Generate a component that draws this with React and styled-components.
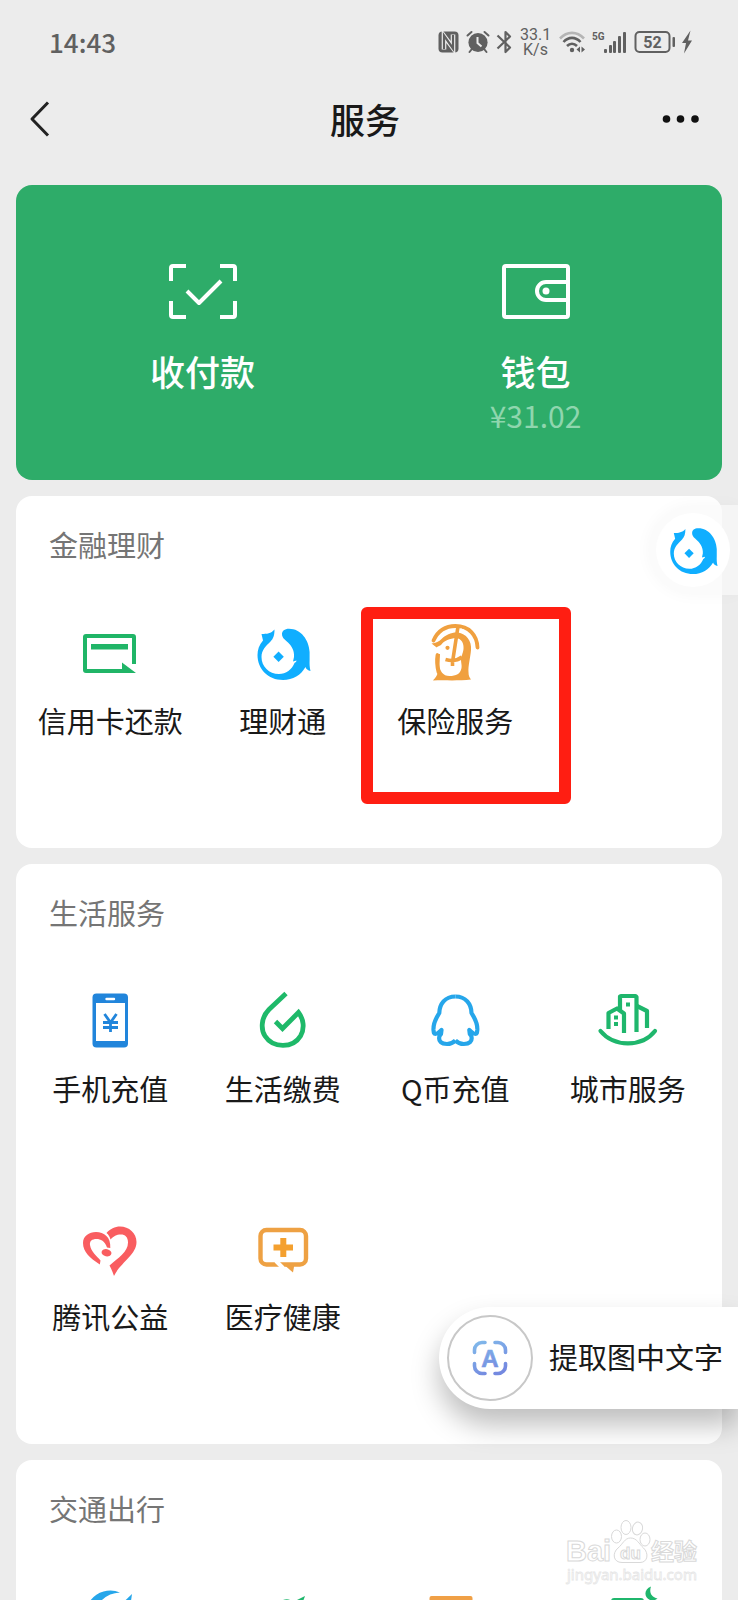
import React from 'react'
import styled, { createGlobalStyle } from 'styled-components'

const GlobalStyle = createGlobalStyle`
  * {
    box-sizing: border-box;
  }

  body {
    margin: 0;
    background-color: #ececec;
    color: #191919;
    font-family: 'Noto Sans CJK SC', 'Noto Sans', sans-serif;
  }

  button {
    padding: 0;
    border: none;
    background: none;
    color: inherit;
    font: inherit;
    cursor: pointer;
  }

  svg {
    display: block;
    flex: none;
    overflow: visible;
  }
`

const Screen = styled.div`
  position: relative;
  height: 100vh;
  overflow: hidden;
`

/* ---------- status bar ---------- */

const StatusBar = styled.header`
  display: flex;
  justify-content: space-between;
  align-items: center;
  height: 83px;
  padding: 0 46px 0 49px;
  color: #606060;
`

const Clock = styled.time`
  font-size: 26px;
  font-weight: 500;
  line-height: 32px;
`

const StatusIcons = styled.div`
  display: flex;
  align-items: center;
  gap: 8px;
`

const Speed = styled.div`
  width: 31px;
  font-family: Roboto, sans-serif;
  font-size: 16px;
  line-height: 15px;
  text-align: center;
`

const Nfc = () => (
  <svg width='21' height='22' viewBox='0 0 21 22'>
    <rect x='0.5' y='0.5' width='20' height='21' rx='4' fill='#606060' />
    <path d='M6 18.5V5L15 17V3.5' fill='none' stroke='#ececec' strokeWidth='4.6' />
    <path d='M6 18V4.5L15 17.5V4' fill='none' stroke='#606060' strokeWidth='2.2' />
  </svg>
)

const Alarm = () => (
  <svg width='22' height='22' viewBox='0 0 22 22'>
    <circle cx='11' cy='11.5' r='9.6' fill='#606060' />
    <path d='M4.5 18.5L2.5 21M17.5 18.5L19.5 21M0.5 4.5L4.5 1M21.5 4.5L17.5 1' stroke='#606060' strokeWidth='2' strokeLinecap='round' />
    <path d='M10.5 6V12L14.5 15.5' fill='none' stroke='#ececec' strokeWidth='2' />
  </svg>
)

const Bluetooth = () => (
  <svg width='15' height='24' viewBox='0 0 15 24' fill='none' stroke='#606060' strokeWidth='2.2' strokeLinejoin='round'>
    <path d='M0.5 5.5L13 17.5L8.5 22V2L13 6.5L0.5 18.5' />
  </svg>
)

const Wifi = () => (
  <svg width='25' height='22' viewBox='0 0 25 22' fill='none' strokeWidth='2.6'>
    <path d='M1 7.5C8 0 18 0 25 7.5' stroke='#b5b5b5' />
    <path d='M4.5 11C9.5 5.5 16.5 5.5 21.5 11' stroke='#606060' />
    <path d='M8 15C11 12 15 12 18 15' stroke='#606060' />
    <circle cx='13' cy='19' r='2.2' fill='#606060' />
    <path d='M21 15.5V21.5L17.5 18.5ZM22.5 15.5V21.5L26 18.5Z' fill='#606060' />
  </svg>
)

const Signal = () => (
  <svg width='34' height='22' viewBox='0 0 34 22' fill='#606060'>
    <text x='0' y='9' fontFamily='Roboto, sans-serif' fontSize='10' fontWeight='700'>5G</text>
    <rect x='12' y='18' width='3' height='4' rx='1' />
    <rect x='17' y='14' width='3' height='8' rx='1' />
    <rect x='21' y='10' width='3' height='12' rx='1' />
    <rect x='26' y='5' width='3' height='17' rx='1' />
    <rect x='31' y='1' width='3' height='21' rx='1' />
  </svg>
)

const Battery = () => (
  <svg width='40' height='22' viewBox='0 0 40 22'>
    <rect x='1.5' y='1' width='34' height='20' rx='4' fill='none' stroke='#606060' strokeWidth='2' />
    <rect x='38.5' y='6' width='2.5' height='10' rx='1' fill='#606060' />
    <text x='18.5' y='17' textAnchor='middle' fontFamily='Roboto, sans-serif' fontSize='16' fontWeight='700' fill='#606060'>52</text>
  </svg>
)

const Bolt = () => (
  <svg width='10' height='24' viewBox='0 0 10 24' fill='#606060'>
    <path d='M8.5 0.5L0 13H4L2 23.5L10 10.5H6Z' />
  </svg>
)

/* ---------- navigation bar ---------- */

const NavBar = styled.nav`
  display: grid;
  grid-template-columns: 1fr auto 1fr;
  align-items: center;
  height: 72px;
  padding: 0 36px 0 28px;
`

const NavButton = styled.button`
  justify-self: ${({ $end }) => $end ? 'end' : 'start'};
`

const Title = styled.h1`
  margin: 0;
  font-size: 35px;
  font-weight: 500;
  line-height: 48px;
`

/* ---------- wallet panel ---------- */

const Main = styled.main`
  display: flex;
  flex-direction: column;
  gap: 16px;
  padding: 30px 16px 0;
`

const PayPanel = styled.section`
  display: grid;
  grid-template-columns: 1fr 1fr;
  align-items: start;
  padding: 79px 20px 45px;
  border-radius: 16px;
  background-color: #2eac69;
  color: #fff;
`

const PayButton = styled.button`
  display: flex;
  flex-direction: column;
  align-items: center;
`

const PayLabel = styled.span`
  margin-top: 28px;
  font-size: 35px;
  font-weight: 500;
  line-height: 48px;
`

const Amount = styled.span`
  color: #8fd6ae;
  font-size: 30px;
  line-height: 40px;
`

const PayCode = () => (
  <svg width='68' height='55' viewBox='0 0 68 55' fill='none' stroke='#fff' strokeWidth='4'>
    <path d='M2 17V4Q2 2 4 2H17M51 2H64Q66 2 66 4V17M66 37V51Q66 53 64 53H51M17 53H4Q2 53 2 51V37' />
    <path d='M18 27L30 39L52 17' strokeLinejoin='round' />
  </svg>
)

const Wallet = () => (
  <svg width='68' height='55' viewBox='0 0 68 55' fill='none' stroke='#fff' strokeWidth='4'>
    <rect x='2' y='2' width='64' height='51' rx='2' />
    <path d='M66 18H44A9 9 0 0 0 44 36H66' />
    <circle cx='44' cy='27' r='3.5' fill='#fff' stroke='none' />
  </svg>
)

/* ---------- service cards ---------- */

const Card = styled.section`
  padding: 0 8px 24px;
  border-radius: 16px;
  background-color: #fff;
`

const CardTitle = styled.h2`
  margin: 0;
  padding: 28px 25px 32px;
  color: #757575;
  font-size: 29px;
  font-weight: 400;
  line-height: 40px;
`

const Grid = styled.div`
  display: grid;
  grid-template-columns: repeat(4, 1fr);
  grid-auto-rows: 228px;
`

const Tile = styled.button`
  position: relative;
  display: flex;
  flex-direction: column;
  align-items: center;
  gap: 19px;
  padding-top: 29px;
  font-size: 29px;
  line-height: 40px;
  white-space: nowrap;
`

/* Frame drawn around a tile to point it out */
const Marker = styled.span`
  position: absolute;
  top: 11px;
  left: -8px;
  width: 210px;
  height: 197px;
  border: 12px solid #ff1e12;
  border-radius: 6px;
`

const Icon = ({ children, ...rest }) => (
  <svg width='56' height='56' viewBox='0 0 56 56' fill='none' {...rest}>{children}</svg>
)

const CreditCard = () => (
  <Icon>
    <path d='M41 46H4Q3 46 3 45V12Q3 11 4 11H51Q52 11 52 12V39' stroke='#20b567' strokeWidth='4' />
    <path d='M9 19H46V24.5H9ZM40 37.5L54 48H40Z' fill='#20b567' />
    <path d='M46 37.5L55 43.5' stroke='#fff' strokeWidth='2' />
  </Icon>
)

const Licaitong = ({ size = 56 }) => (
  <svg width={size} height={size} viewBox='0 0 56 56' fill='#10aeff'>
    <path d='M19.5 4.5C16 8.5 12 9 6.5 9L8 15.5C4 20 2.5 25 2.5 30C2.5 44 13 55 28 55C38 55 46 50 50.5 42C51 44 53 45.5 55.5 46C54.5 42 54.5 39 54.6 35V27C54 15 46 3.7 34 3.7C29.5 3.7 27 6 27 9C27 13 30 14.5 33 17.5C37 21.5 39.5 26 39 32L38 36.5L41.5 35.5C41.5 37 40 37.5 39.5 38C37 44.5 31 49 24 49C14 49 6.5 41.5 6.5 32C6.5 25 11 21 15.5 16.5C18.5 13.5 19.5 10 19.5 4.5Z' />
    <path d='M23.6 26.5L28.8 31.7L23.6 36.9L18.4 31.7Z' />
  </svg>
)

const Insurance = () => (
  <Icon>
    <path d='M6.5 15.5C11 5.5 18 1 28.5 1C42 1 50 10 50.5 22.5' stroke='#f0a03f' strokeWidth='3.8' strokeLinecap='round' />
    <path d='M4.5 18.5C9 18 12 16.5 14.5 14C19 9.5 25 7 31 7.5C39 8.5 45 16 44 25C43.5 32 41 41 41.5 47C41.5 51 42.5 52.5 44 54.5C32 56 18 55 6 55.5C8 53 10.5 51 10.5 47L9 22Z' fill='#f0a03f' />
    <path d='M7 23.5L14 20C17 15.5 23 13.5 29 13C35 13.5 37 19 36.5 24C36 29 34 31 34 35C34 38 35 40 34.5 43C33.5 49 29 51 22.5 51C16 51 12.5 46 12.5 40L13 29H7Z' fill='#fff' />
    <path d='M10.5 30C9.5 36 10 41 11.5 47' stroke='#f0a03f' strokeWidth='3.8' strokeLinecap='round' />
    <path d='M33.5 4C37.5 5.5 41.5 9 43.5 13' stroke='#fff' strokeWidth='1.6' />
    <path d='M31 1.5L26 34M18.5 34.5C24 36 30 36 35 32M25.5 35V41' stroke='#f0a03f' strokeWidth='3.6' />
    <circle cx='20.5' cy='22.8' r='2.1' fill='#f0a03f' />
  </Icon>
)

const Phone = () => (
  <Icon>
    <rect x='10.5' y='0.5' width='35.5' height='54' rx='4' fill='#2185db' />
    <rect x='14' y='10' width='29' height='38' fill='#fff' />
    <path d='M24.5 6H32' stroke='#fff' strokeWidth='2.4' strokeLinecap='round' />
    <path d='M22.5 21L28.5 29.5L34.5 21M28.5 28V39M21 29.5H36M21 34.5H36' stroke='#2185db' strokeWidth='2.8' />
  </Icon>
)

const Drop = () => (
  <Icon stroke='#1eb969' strokeWidth='4.8'>
    <path d='M31 0.5L14 16.5C5.5 25 6 37 10 43C18 55.5 38 55.5 45.5 43C50 35 48.5 26 43.5 19.5L27.5 35.5L20.5 28.5' />
  </Icon>
)

const penguinSide = 'M28.4 3.5C18 3.5 12.5 11 12.3 20C10 24 6 29 6.5 37C6.8 40 7 41 8.5 41C10.5 41 12.5 38.5 14.5 37L14 41L12.5 43C11 48.5 14.5 51 20 51C24 51 26.5 49.5 28.4 47.5'

const Penguin = () => (
  <Icon stroke='#26a6ea' strokeWidth='4.2' strokeLinejoin='round'>
    <path d={penguinSide} />
    <path d={penguinSide} transform='translate(56.8) scale(-1 1)' />
  </Icon>
)

const City = () => (
  <Icon stroke='#1fb66c' strokeWidth='4.2' strokeLinejoin='round'>
    <path d='M0.5 38C14 54.5 42 54.5 55 38' strokeLinecap='round' />
    <path d='M8.5 36V20L17 15.5L24 20.5V40' />
    <path d='M20 17V3.5L21.5 3H35.5L36.5 4V39' />
    <path d='M37 13L47 18V35' />
    <path d='M26 9.5H30V13.5H26ZM14 22.5H18V26.5H14ZM14 29H18V33H14Z' fill='#1fb66c' stroke='none' />
  </Icon>
)

const Heart = () => (
  <Icon fill='#f95d60'>
    <path d='M17.8 43.5C8 37 1 31 1 22C1 15 7 11 14 11C22 11 29 16 28.3 27L25 26.5C23 20 18.5 18 14.5 18C10 18 7.5 20 8 24C9 31 15 35 18.5 39.5Z' />
    <path d='M24.5 12C28 8 33 5.5 38 5.5C47 5.5 54.5 12 54.5 21C54.5 34 38 42 32 55C30.5 51 29.5 48 27.5 44.5C36 37 46 31 46 21.5C46 16 43 13.5 39 13.5C34 13.5 32 15 28.5 18.5C28 16 26.5 13.5 24.5 12Z' />
    <ellipse cx='24.5' cy='31.7' rx='5' ry='3.6' transform='rotate(12 24.5 31.7)' />
  </Icon>
)

const Health = () => (
  <Icon>
    <rect x='5.5' y='9' width='45.5' height='34.5' rx='6' stroke='#eea143' strokeWidth='4.4' />
    <path d='M21 40L28 47' stroke='#fff' strokeWidth='4' />
    <path d='M27 42L38 51.5L39.5 43Z' fill='#eea143' />
    <path d='M28.3 17V36M18.5 26.5H38' stroke='#f4a02f' strokeWidth='6' />
  </Icon>
)

const Travel = () => (
  <Icon>
    <path d='M8 12A25 25 0 0 1 38 3.5Q26 4 18 13V30H8Z' fill='#26a6ea' />
    <path d='M50 5L30 24L46 32Z' fill='#26a6ea' />
  </Icon>
)

const Leaf = () => (
  <Icon>
    <path d='M28 11Q34 9 38 13L50 7Q46 20 34 26L28 20Z' fill='#1fb66c' />
  </Icon>
)

const Ticket = () => (
  <Icon>
    <rect x='2.5' y='7' width='43' height='44' rx='2' fill='#f0a046' />
  </Icon>
)

const Hotel = () => (
  <Icon>
    <rect x='11' y='9' width='33' height='44' rx='3' fill='#1fb66c' />
    <path d='M51 -2.5C44 0 43.5 8 50 11C53 12 56 11 57.5 9.5C51 8 49 3 51 -2.5Z' fill='#1fb66c' />
  </Icon>
)

const sections = [
  {
    title: '金融理财',
    items: [
      { icon: CreditCard, label: '信用卡还款' },
      { icon: Licaitong, label: '理财通' },
      { icon: Insurance, label: '保险服务', marked: true }
    ]
  },
  {
    title: '生活服务',
    items: [
      { icon: Phone, label: '手机充值' },
      { icon: Drop, label: '生活缴费' },
      { icon: Penguin, label: 'Q币充值' },
      { icon: City, label: '城市服务' },
      { icon: Heart, label: '腾讯公益' },
      { icon: Health, label: '医疗健康' }
    ]
  },
  {
    title: '交通出行',
    items: [{ icon: Travel }, { icon: Leaf }, { icon: Ticket }, { icon: Hotel }]
  }
]

const Service = props => {
  const ServiceIcon = props.icon
  return (
    <Tile type='button'>
      <ServiceIcon />
      {props.label && <span>{props.label}</span>}
      {props.marked && <Marker />}
    </Tile>
  )
}

/* ---------- floating parts ---------- */

const FloatTab = styled.button`
  position: absolute;
  top: 505px;
  right: 0;
  display: flex;
  align-items: center;
  width: 90px;
  height: 90px;
  padding-left: 8px;
  border-radius: 45px 0 0 45px;
  background-color: rgba(250, 250, 250, 0.7);
  box-shadow: 0 0 16px rgba(0, 0, 0, 0.03);
`

const FloatDisc = styled.span`
  display: flex;
  justify-content: center;
  align-items: center;
  width: 74px;
  height: 74px;
  border-radius: 50%;
  background-color: #fff;
`

const ExtractButton = styled.button`
  position: absolute;
  right: 0;
  bottom: 191px;
  display: flex;
  align-items: center;
  gap: 16px;
  height: 102px;
  padding: 0 15px 0 8px;
  border-radius: 51px 0 0 51px;
  background-color: #fff;
  box-shadow: 0 16px 28px rgba(0, 0, 0, 0.26);
  font-size: 29px;
  line-height: 40px;
`

const ExtractLabel = styled.span`
  padding-bottom: 4px;
`

const ExtractDisc = styled.span`
  display: flex;
  justify-content: center;
  align-items: center;
  width: 86px;
  height: 86px;
  border: 2px solid #c8c8c8;
  border-radius: 50%;
`

const ExtractIcon = () => (
  <svg width='36' height='36' viewBox='0 0 36 36'>
    <defs>
      <linearGradient id='extract' gradientUnits='userSpaceOnUse' x1='0' y1='0' x2='16' y2='36'>
        <stop offset='0' stopColor='#82bdeb' />
        <stop offset='1' stopColor='#7489e0' />
      </linearGradient>
    </defs>
    <path d='M2.5 12.5V10A7.5 7.5 0 0 1 10 2.5H13M23 2.5H26A7.5 7.5 0 0 1 33.5 10V12.5M33.5 23.5V26A7.5 7.5 0 0 1 26 33.5H23M13 33.5H10A7.5 7.5 0 0 1 2.5 26V23.5' fill='none' stroke='url(#extract)' strokeWidth='3.6' strokeLinecap='round' />
    <text x='18' y='27' textAnchor='middle' fontFamily='Liberation Sans, sans-serif' fontSize='24' fontWeight='700' fill='url(#extract)' stroke='url(#extract)' strokeWidth='0.6'>A</text>
  </svg>
)

const Watermark = styled.div`
  position: absolute;
  right: 39px;
  bottom: 16px;
  pointer-events: none;
`

const BaiduLogo = () => (
  <svg width='133' height='66' viewBox='0 0 133 66' fill='#fff' stroke='#d9d9d9' strokeWidth='1' fontFamily='Liberation Sans, sans-serif' fontWeight='700'>
    <text x='0' y='43' fontSize='29'>Bai</text>
    <ellipse cx='50.5' cy='18.5' rx='5' ry='6.5' />
    <ellipse cx='60' cy='9.5' rx='5' ry='7' />
    <ellipse cx='71.5' cy='10.5' rx='5' ry='6.5' transform='rotate(12 71.5 10.5)' />
    <ellipse cx='79' cy='21.5' rx='5' ry='6.5' />
    <path d='M64.5 20C71 20 73 26 77.5 30C83 35 82 44.5 74 44.5H56C47 44.5 46 35 52 30C57 26 58.5 20 64.5 20Z' />
    <text x='54' y='41' fontSize='17'>du</text>
    <text x='85' y='42' fontSize='23' fontFamily='Noto Sans CJK SC, sans-serif'>经验</text>
    <text x='1' y='62' fontSize='15' fontFamily='Noto Sans, sans-serif' fontWeight='400' stroke='#e6e6e6' strokeWidth='0.8'>jingyan.baidu.com</text>
  </svg>
)

export default function App () {
  return (
    <Screen>
      <GlobalStyle />
      <StatusBar>
        <Clock>14:43</Clock>
        <StatusIcons>
          <Nfc />
          <Alarm />
          <Bluetooth />
          <Speed>33.1 K/s</Speed>
          <Wifi />
          <Signal />
          <Battery />
          <Bolt />
        </StatusIcons>
      </StatusBar>
      <NavBar>
        <NavButton type='button' aria-label='返回'>
          <svg width='24' height='36' viewBox='0 0 24 36' fill='none' stroke='#222' strokeWidth='3'>
            <path d='M20 1.5L4 18L20 34.5' strokeLinejoin='round' />
          </svg>
        </NavButton>
        <Title>服务</Title>
        <NavButton type='button' aria-label='更多' $end>
          <svg width='40' height='10' viewBox='0 0 40 10' fill='#111'>
            <circle cx='4.5' cy='5' r='3.8' />
            <circle cx='18.5' cy='5' r='3.8' />
            <circle cx='33' cy='5' r='3.8' />
          </svg>
        </NavButton>
      </NavBar>
      <Main>
        <PayPanel>
          <PayButton type='button'>
            <PayCode />
            <PayLabel>收付款</PayLabel>
          </PayButton>
          <PayButton type='button'>
            <Wallet />
            <PayLabel>钱包</PayLabel>
            <Amount>¥31.02</Amount>
          </PayButton>
        </PayPanel>
        {sections.map(section => (
          <Card key={section.title}>
            <CardTitle>{section.title}</CardTitle>
            <Grid>
              {section.items.map((item, i) => <Service key={i} {...item} />)}
            </Grid>
          </Card>
        ))}
      </Main>
      <FloatTab type='button' aria-label='理财通'>
        <FloatDisc>
          <Licaitong size={50} />
        </FloatDisc>
      </FloatTab>
      <ExtractButton type='button'>
        <ExtractDisc>
          <ExtractIcon />
        </ExtractDisc>
        <ExtractLabel>提取图中文字</ExtractLabel>
      </ExtractButton>
      <Watermark>
        <BaiduLogo />
      </Watermark>
    </Screen>
  )
}
